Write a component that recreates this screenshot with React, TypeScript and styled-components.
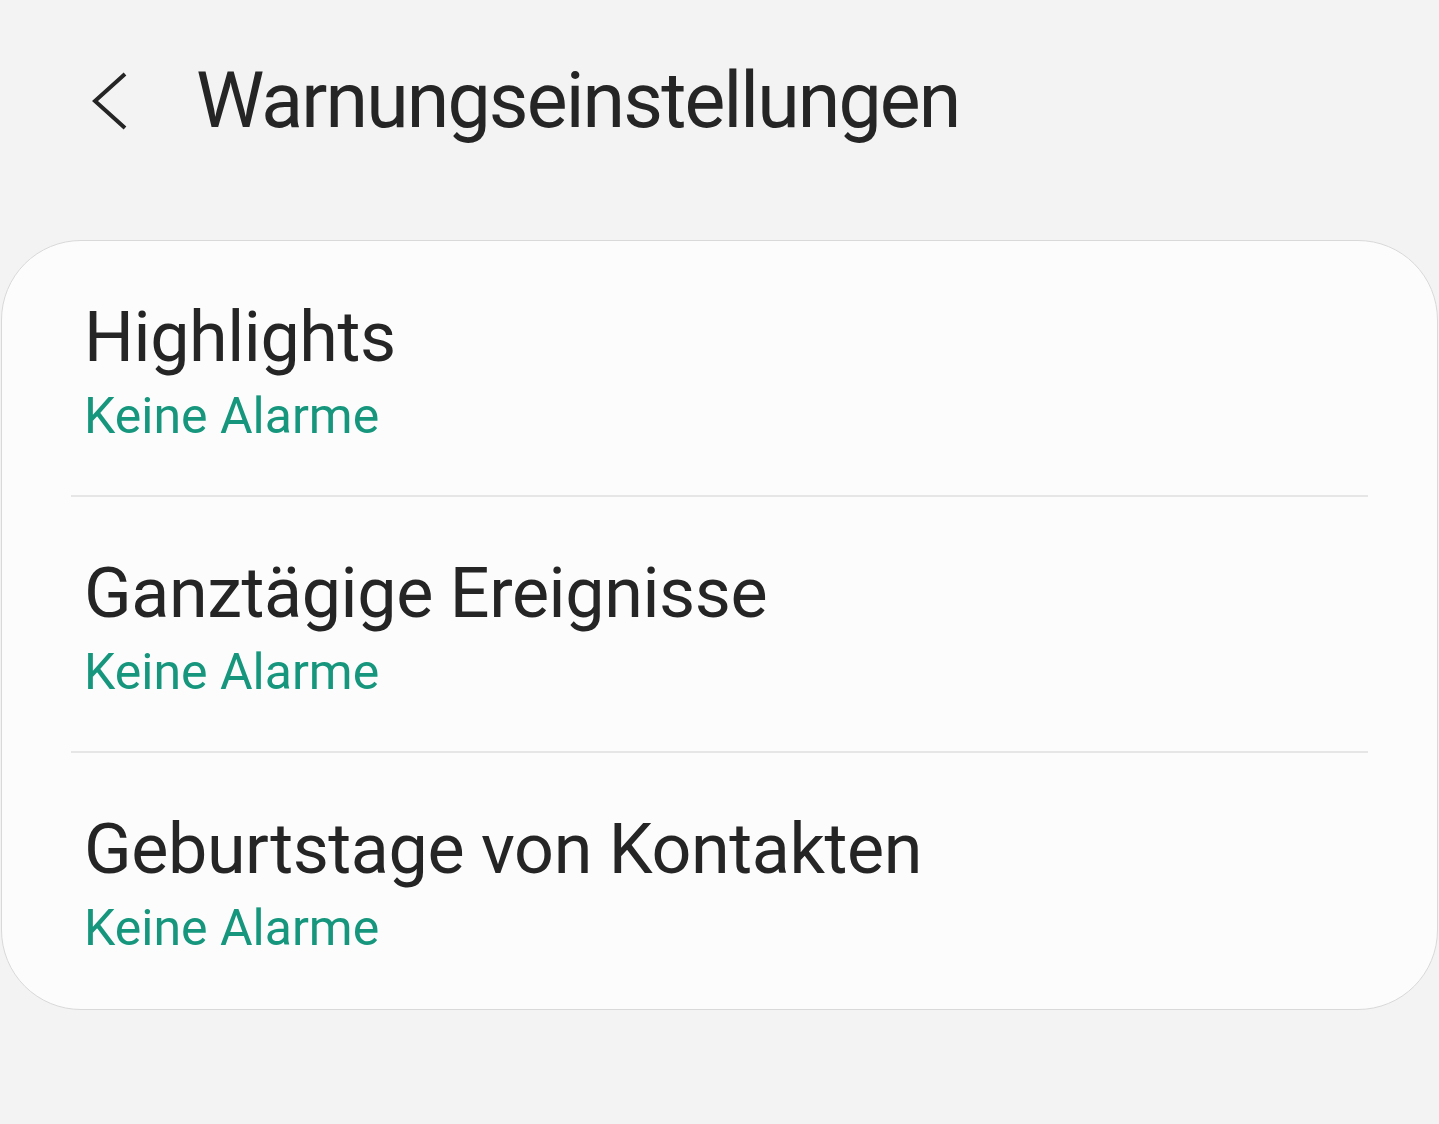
import styled, { createGlobalStyle } from "styled-components";

const GlobalStyle = createGlobalStyle`
  html, body {
    margin: 0;
    padding: 0;
    background: #f3f3f3;
  }
  body {
    font-family: Roboto, "Noto Sans", "Liberation Sans", sans-serif;
    -webkit-font-smoothing: antialiased;
  }
`;

const Page = styled.div`
  width: 1439px;
  min-height: 1124px;
  background: #f3f3f3;
  overflow: hidden;
`;

const Header = styled.header`
  display: flex;
  align-items: center;
  height: 100px;
  padding-top: 51px;
  padding-left: 89px;
`;

const BackButton = styled.button`
  display: flex;
  align-items: center;
  justify-content: center;
  width: 42px;
  height: 62px;
  padding: 0;
  border: none;
  background: none;
  margin-right: 65px;
`;

const Title = styled.h1`
  margin: 0;
  font-size: 77px;
  line-height: 100px;
  letter-spacing: -1.85px;
  font-weight: 400;
  color: #252525;
`;

const Card = styled.ul`
  list-style: none;
  margin: 89px 0 0 1px;
  padding: 0;
  width: 1437px;
  box-sizing: border-box;
  background: #fcfcfc;
  border: 1px solid #d9d9d9;
  border-radius: 80px;
`;

const Row = styled.li<{ $divider?: boolean }>`
  display: flex;
  flex-direction: column;
  padding: 56px 0 51px 82px;
  height: 256px;
  box-sizing: border-box;
  position: relative;
  &::after {
    content: "";
    display: ${(p) => (p.$divider ? "block" : "none")};
    position: absolute;
    left: 69px;
    right: 69px;
    bottom: 0;
    height: 2px;
    background: #e6e6e6;
  }
`;

const RowTitle = styled.span`
  font-size: 70px;
  line-height: 80px;
  letter-spacing: -0.4px;
  color: #252525;
`;

const RowValue = styled.span`
  margin-top: 9px;
  font-size: 50px;
  line-height: 60px;
  color: #16977d;
`;

const items = ["Highlights", "Ganztägige Ereignisse", "Geburtstage von Kontakten"];

function App() {
  return (
    <Page>
      <GlobalStyle />
      <Header>
        <BackButton aria-label="Zurück">
          <svg width="42" height="62" viewBox="0 0 42 62">
            <polyline
              points="36,4 6,31 36,58"
              fill="none"
              stroke="#252525"
              strokeWidth="4"
            />
          </svg>
        </BackButton>
        <Title>Warnungseinstellungen</Title>
      </Header>
      <Card>
        {items.map((item, i) => (
          <Row key={item} $divider={i < items.length - 1}>
            <RowTitle>{item}</RowTitle>
            <RowValue>Keine Alarme</RowValue>
          </Row>
        ))}
      </Card>
    </Page>
  );
}

export default App;
